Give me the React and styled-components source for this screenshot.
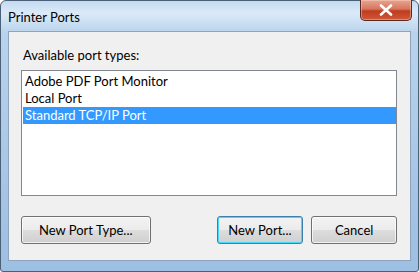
import styled, { createGlobalStyle } from "styled-components";

const GlobalStyle = createGlobalStyle`
  html, body {
    margin: 0;
    padding: 0;
    background: #ffffff;
  }
  body {
    font-family: Lato, "Noto Sans", sans-serif;
  }
`;

const Frame = styled.div`
  width: 419px;
  height: 272px;
  box-sizing: border-box;
  display: flex;
  flex-direction: column;
  padding: 0 7px 10px 7px;
  border: 1px solid #4b5f76;
  border-radius: 6px 6px 3px 3px;
  background: linear-gradient(
    180deg,
    #c3daf0 0px,
    #dbeaf8 12px,
    #b9d3ec 32px,
    #a9c7e6 60%,
    #9dbfe2 100%
  );
  position: relative;
`;

const TitleBar = styled.div`
  height: 30px;
  display: flex;
  align-items: center;
  justify-content: space-between;
`;

const Title = styled.span`
  font-size: 13px;
  color: #000;
  margin-top: 2px;
`;

const CloseButton = styled.div`
  position: absolute;
  top: -1px;
  right: 6px;
  width: 52px;
  height: 21px;
  box-sizing: border-box;
  border: 1px solid #5a2a20;
  border-top: none;
  border-radius: 0 0 5px 5px;
  background: linear-gradient(
    180deg,
    #e8a593 0%,
    #d6765e 45%,
    #c13b1e 55%,
    #d0583a 100%
  );
  display: flex;
  align-items: center;
  justify-content: center;
  box-shadow: inset 0 0 0 1px rgba(255, 220, 200, 0.4);
`;

const Client = styled.div`
  flex: 1;
  background: #f0f0f0;
  border: 1px solid #8ea4bd;
  display: flex;
  flex-direction: column;
  padding: 14px 13px 16px 12px;
`;

const Label = styled.div`
  font-size: 13px;
  color: #000;
  line-height: 19px;
  padding-left: 2px;
  margin-bottom: 5px;
`;

const ListBox = styled.div`
  height: 126px;
  box-sizing: border-box;
  background: #fff;
  border: 1px solid #828790;
  padding: 2px 0 0 1px;
  display: flex;
  flex-direction: column;
`;

const Row = styled.div`
  height: 17px;
  line-height: 17px;
  font-size: 13px;
  padding-left: 2px;
  color: ${(p) => (p.$selected ? "#ffffff" : "#000000")};
  background: ${(p) => (p.$selected ? "#3399ff" : "transparent")};
`;

const ButtonRow = styled.div`
  margin-top: auto;
  display: flex;
  align-items: center;
`;

const Button = styled.div`
  width: ${(p) => p.$w}px;
  height: 28px;
  box-sizing: border-box;
  margin-left: ${(p) => p.$ml || 0}px;
  border: 1px solid ${(p) => (p.$default ? "#3c7fb1" : "#707070")};
  border-radius: 3px;
  background: linear-gradient(
    180deg,
    #f3f3f3 0%,
    #ebebeb 50%,
    #dddddd 51%,
    #cfcfcf 100%
  );
  box-shadow: inset 0 0 0 1px
    ${(p) => (p.$default ? "#48d8fb" : "rgba(255,255,255,0.7)")};
  display: flex;
  align-items: center;
  justify-content: center;
  font-size: 13px;
  color: #000;
`;

export default function App() {
  const options = ["Adobe PDF Port Monitor", "Local Port", "Standard TCP/IP Port"];

  return (
    <>
      <GlobalStyle />
      <Frame>
        <TitleBar>
          <Title>Printer Ports</Title>
        </TitleBar>
        <CloseButton>
          <svg width="14" height="12" viewBox="0 0 14 12">
            <path
              d="M2 1.5 L12 10.5 M12 1.5 L2 10.5"
              stroke="#ffffff"
              strokeWidth="2.6"
              strokeLinecap="round"
            />
          </svg>
        </CloseButton>
        <Client>
          <Label>Available port types:</Label>
          <ListBox>
            {options.map((o, i) => (
              <Row key={o} $selected={i === 2}>
                {o}
              </Row>
            ))}
          </ListBox>
          <ButtonRow>
            <Button $w={130}>New Port Type...</Button>
            <Button $w={87} $ml={66} $default>
              New Port...
            </Button>
            <Button $w={86} $ml={8}>
              Cancel
            </Button>
          </ButtonRow>
        </Client>
      </Frame>
    </>
  );
}
